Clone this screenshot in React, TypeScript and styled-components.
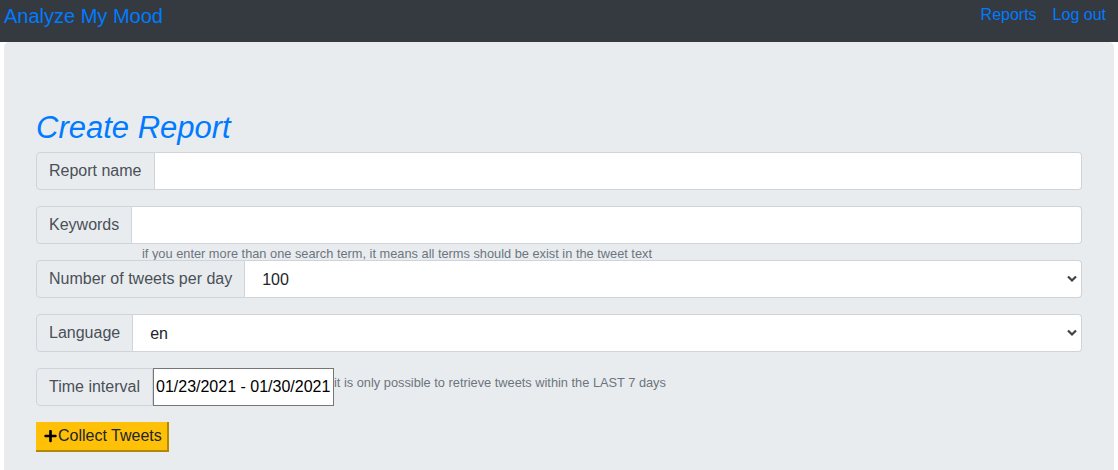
import React from 'react';
import styled, { createGlobalStyle } from 'styled-components';

const colors = {
  navbar: '#343a40',
  primary: '#007bff',
  jumbotron: '#e9ecef',
  border: '#ced4da',
  addonText: '#495057',
  muted: '#6c757d',
  warning: '#ffc107',
  warningShadow: '#b38800',
  dark: '#212529',
};

const GlobalStyle = createGlobalStyle`
  body {
    margin: 0;
    background: #fff;
    font-family: "Liberation Sans", Arial, sans-serif;
    font-size: 16px;
    color: ${colors.dark};
  }
`;

const Navbar = styled.nav`
  display: flex;
  justify-content: space-between;
  align-items: flex-start;
  height: 42px;
  padding: 0 4px;
  background: ${colors.navbar};
`;

const Brand = styled.a`
  font-size: 20px;
  line-height: 32px;
  color: ${colors.primary};
  text-decoration: none;
`;

const NavLinks = styled.div`
  display: flex;
`;

const NavLink = styled.a`
  padding: 0 8px;
  line-height: 30px;
  color: ${colors.primary};
  text-decoration: none;
`;

const Jumbotron = styled.main`
  margin: 0 4px;
  padding: 64px 32px;
  background: ${colors.jumbotron};
  border-radius: 5px;
`;

const Title = styled.h2`
  margin: 0 0 8px;
  padding-top: 5px;
  font-size: 31px;
  line-height: 33px;
  font-style: italic;
  font-weight: 400;
  color: ${colors.primary};
`;

const InputGroup = styled.div<{ $tight?: boolean }>`
  display: flex;
  height: 38px;
  margin-bottom: ${p => (p.$tight ? 0 : 16)}px;
  width: 1046px;
`;

const Addon = styled.label`
  display: flex;
  align-items: center;
  padding: 0 12px;
  background: ${colors.jumbotron};
  border: 1px solid ${colors.border};
  border-radius: 4px 0 0 4px;
  color: ${colors.addonText};
  line-height: 24px;
  white-space: nowrap;
`;

const TextInput = styled.input`
  flex: 1;
  min-width: 0;
  border: 1px solid ${colors.border};
  border-left: none;
  border-radius: 0 4px 4px 0;
  background: #fff;
  padding: 0 12px;
  font: inherit;
  color: ${colors.addonText};
`;

const SelectWrap = styled.div`
  position: relative;
  flex: 1;
  display: flex;
`;

const Select = styled.select`
  flex: 1;
  appearance: none;
  border: 1px solid ${colors.border};
  border-left: none;
  border-radius: 0 4px 4px 0;
  background: #fff;
  padding: 0 28px 0 17px;
  font: inherit;
  color: ${colors.dark};
`;

const Chevron = styled.svg`
  position: absolute;
  right: 4px;
  top: 50%;
  margin-top: -4px;
  pointer-events: none;
`;

const HelpBlock = styled.div`
  height: 14px;
  padding: 2px 0 0 106px;
  font-size: 12.8px;
  line-height: 16px;
  color: ${colors.muted};
`;

const DateInput = styled.input`
  width: 181px;
  box-sizing: border-box;
  border: 1px solid #767676;
  border-radius: 0;
  padding: 1px 2px;
  background: #fff;
  font: inherit;
  color: #000;
`;

const InlineHelp = styled.small`
  align-self: flex-start;
  margin-top: 5px;
  font-size: 12.8px;
  line-height: 19px;
  color: ${colors.muted};
  white-space: nowrap;
`;

const CollectButton = styled.button`
  display: inline-flex;
  align-items: center;
  gap: 1px;
  height: 30px;
  padding: 0 5px 0 8px;
  background: ${colors.warning};
  border: none;
  border-right: 2px solid ${colors.warningShadow};
  border-bottom: 2px solid ${colors.warningShadow};
  font: inherit;
  color: ${colors.dark};
`;

const ChevronIcon = () => (
  <Chevron width="12" height="8" viewBox="0 0 12 8">
    <path d="M2 1.5 L6 5.5 L10 1.5" fill="none" stroke="#3d4247" strokeWidth="2.2" />
  </Chevron>
);

const PlusIcon = () => (
  <svg width="13" height="14" viewBox="0 0 448 512">
    <path
      fill="#000"
      d="M416 208H272V64c0-17.67-14.33-32-32-32h-32c-17.67 0-32 14.330-32 32v144H32c-17.67 0-32 14.33-32 32v32c0 17.67 14.33 32 32 32h144v144c0 17.67 14.33 32 32 32h32c17.67 0 32-14.33 32-32V304h144c17.67 0 32-14.33 32-32v-32c0-17.67-14.33-32-32-32z"
    />
  </svg>
);

export default function App() {
  return (
    <>
      <GlobalStyle />
      <Navbar>
        <Brand href="#">Analyze My Mood</Brand>
        <NavLinks>
          <NavLink href="#">Reports</NavLink>
          <NavLink href="#">Log out</NavLink>
        </NavLinks>
      </Navbar>
      <Jumbotron>
        <Title>Create Report</Title>
        <InputGroup>
          <Addon>Report name</Addon>
          <TextInput type="text" />
        </InputGroup>
        <InputGroup $tight>
          <Addon>Keywords</Addon>
          <TextInput type="text" />
        </InputGroup>
        <HelpBlock>if you enter more than one search term, it means all terms should be exist in the tweet text</HelpBlock>
        <InputGroup>
          <Addon>Number of tweets per day</Addon>
          <SelectWrap>
            <Select defaultValue="100">
              <option>100</option>
              <option>200</option>
              <option>500</option>
            </Select>
            <ChevronIcon />
          </SelectWrap>
        </InputGroup>
        <InputGroup>
          <Addon>Language</Addon>
          <SelectWrap>
            <Select defaultValue="en">
              <option>en</option>
              <option>de</option>
              <option>fr</option>
            </Select>
            <ChevronIcon />
          </SelectWrap>
        </InputGroup>
        <InputGroup>
          <Addon>Time interval</Addon>
          <DateInput type="text" defaultValue="01/23/2021 - 01/30/2021" />
          <InlineHelp>it is only possible to retrieve tweets within the LAST 7 days</InlineHelp>
        </InputGroup>
        <CollectButton type="button">
          <PlusIcon />
          Collect Tweets
        </CollectButton>
      </Jumbotron>
    </>
  );
}
